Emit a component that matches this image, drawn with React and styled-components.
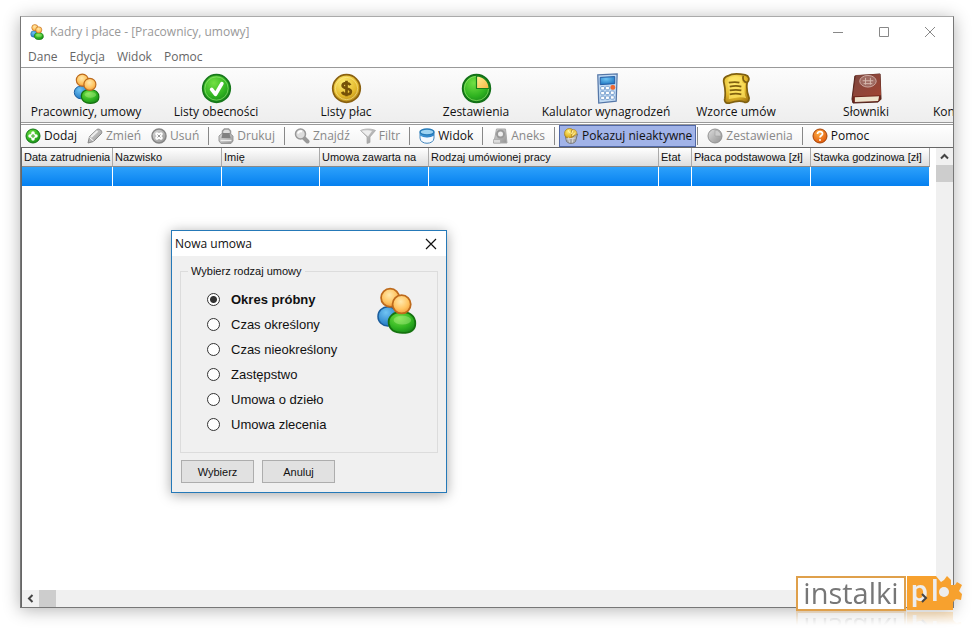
import React, { useState } from 'react';
import styled, { createGlobalStyle, css } from 'styled-components';

const modules = [
  { name: 'Pracownicy, umowy', icon: 'people' },
  { name: 'Listy obecności', icon: 'check' },
  { name: 'Listy płac', icon: 'coin' },
  { name: 'Zestawienia', icon: 'pie' },
  { name: 'Kalulator wynagrodzeń', icon: 'calc' },
  { name: 'Wzorce umów', icon: 'scroll' },
  { name: 'Słowniki', icon: 'book' },
  { name: 'Kon' },
];

// one group = buttons between two separators
const tools = [
  [
    { name: 'Dodaj', icon: 'add' },
    { name: 'Zmień', icon: 'pencil', disabled: true },
    { name: 'Usuń', icon: 'remove', disabled: true },
  ],
  [{ name: 'Drukuj', icon: 'printer', disabled: true }],
  [
    { name: 'Znajdź', icon: 'search', disabled: true },
    { name: 'Filtr', icon: 'funnel', disabled: true },
  ],
  [{ name: 'Widok', icon: 'view' }],
  [{ name: 'Aneks', icon: 'annex', disabled: true }],
  [{ name: 'Pokazuj nieaktywne', icon: 'inactive', pressed: true }],
  [{ name: 'Zestawienia', icon: 'report', disabled: true }],
  [{ name: 'Pomoc', icon: 'help' }],
];

const columns = [
  { name: 'Data zatrudnienia', width: 91 },
  { name: 'Nazwisko', width: 109 },
  { name: 'Imię', width: 98 },
  { name: 'Umowa zawarta na', width: 109 },
  { name: 'Rodzaj umówionej pracy' },
  { name: 'Etat', width: 33 },
  { name: 'Płaca podstawowa [zł]', width: 119 },
  { name: 'Stawka godzinowa [zł]', width: 119 },
];

const contracts = [
  'Okres próbny',
  'Czas określony',
  'Czas nieokreślony',
  'Zastępstwo',
  'Umowa o dzieło',
  'Umowa zlecenia',
];

const shapes = {
  people: (
    <>
      <ellipse cx="10.2" cy="20" rx="6.8" ry="6.6" fill="url(#blue)" stroke="#1a5c9c" strokeWidth="1" />
      <circle cx="11.700" cy="7.300" r="6.200" fill="url(#skin)" stroke="#bd6a1c" strokeWidth="1.200" />
      <path d="M10.700 25c-.7-5 3.300-8 8.800-8s9.300 3 9.300 7.800-3.800 6.500-8.800 6.500-8.500-1.800-9.300-6.300z" fill="url(#green)" stroke="#15720f" strokeWidth="1.200" />
      <ellipse cx="20" cy="22.500" rx="6" ry="3" fill="#c2f59b" opacity=".35" />
      <circle cx="19.500" cy="11.800" r="6.200" fill="url(#skin)" stroke="#bd6a1c" strokeWidth="1.200" />
    </>
  ),
  check: (
    <>
      <circle cx="16" cy="16" r="14.200" fill="url(#green)" stroke="#17781b" strokeWidth="1.800" />
      <circle cx="16" cy="16" r="12" fill="none" stroke="#9ee77f" opacity=".6" />
      <path d="M11 17l4 5 6.500-11" fill="none" stroke="#fff" strokeWidth="3.800" strokeLinecap="round" strokeLinejoin="round" />
    </>
  ),
  coin: (
    <>
      <circle cx="16" cy="16" r="14.200" fill="url(#gold)" stroke="#8a6110" strokeWidth="1.800" />
      <circle cx="16" cy="16" r="11.500" fill="none" stroke="#fff0a0" opacity=".6" />
      <path d="M20 12.500c-1-1.600-2.500-2-4-2-2.500 0-4 .8-4 2.500 0 4 8.500 2 8.500 6 0 2-2 3-4.500 3s-3.800-.8-4.500-2.500M16 8v16" fill="none" stroke="#765208" strokeWidth="2.800" />
    </>
  ),
  pie: (
    <>
      <circle cx="16" cy="16" r="14.200" fill="url(#green)" stroke="#127017" strokeWidth="2" />
      <circle cx="16" cy="16" r="12.500" fill="none" stroke="#a4ea78" opacity=".6" />
      <path d="M16 16V3a13 13 0 0 1 13 13z" fill="url(#pieSlice)" stroke="#17801a" strokeWidth="1.200" />
    </>
  ),
  calc: (
    <>
      <path d="M7 2l20-1-1 28-18 2z" fill="#c3dcf4" stroke="#5577a8" strokeWidth="1.300" />
      <path d="M9.500 4.500l15-.8v7.300l-15 1z" fill="url(#blue)" stroke="#245aa2" />
      <g fill="#fff" stroke="#5d8ac2" strokeWidth=".8">
        <rect x="10" y="14" width="4" height="3.500" rx="1" /><rect x="15" y="13.800" width="4" height="3.500" rx="1" />
        <rect x="10" y="19" width="4" height="3.500" rx="1" /><rect x="15" y="18.800" width="4" height="3.500" rx="1" /><rect x="20" y="18.600" width="4" height="3.500" rx="1" />
        <rect x="10" y="24" width="4" height="3.500" rx="1" /><rect x="15" y="23.800" width="4" height="3.500" rx="1" /><rect x="20" y="23.500" width="4" height="3.500" rx="1" />
      </g>
      <rect x="20" y="12.500" width="5" height="4.800" rx="2" fill="#ef6830" />
    </>
  ),
  scroll: (
    <>
      <path d="M7 3C12 0 20 1 25 2c4 1 5 5 2 8-1 6 0 11 2 16 0 3-2 5-5 4-5-2-9-1-15 1-4 1-6-2-5-5 1-7 0-12-1-16-1-4 1-6 4-7z" fill="url(#gold)" stroke="#80600f" strokeWidth="1.800" />
      <path d="M8 5c5-2 10-2 14-1v6l3 1c-1 6-1 11 1 15-6-2-12 0-18 1 1-7 0-12-1-17z" fill="#ffe565" opacity=".7" />
      <path d="M23 3c-1 3 0 6 4 7M8 10c5-1 8-1 11 0M9 14c5-1 8-1 12 0M9 18c5-1 8-1 12 0M9 22c5-1 8-1 12 0" fill="none" stroke="#80600f" strokeWidth="1.800" />
    </>
  ),
  book: (
    <>
      <path d="M4 3l26-2 1 26-3 3-26 1-1-4z" fill="#70261a" stroke="#4e2119" strokeWidth="1" />
      <path d="M5 2l25-1 1 22-29 1z" fill="url(#leather)" />
      <path d="M4 25l25-1-1 5-24 1z" fill="#eee4cd" />
      <ellipse cx="17.500" cy="8.500" rx="8.500" ry="6" fill="#9f6b62" stroke="#cdaaa2" strokeWidth="1" />
      <path d="M12 8h11M15 5v7M20 5v7M13 11h9" stroke="#d8bbb0" />
    </>
  ),
  add: (
    <>
      <circle cx="16" cy="16" r="14" fill="url(#green)" stroke="#137715" strokeWidth="2" />
      <path d="M16 10v12M10 16h12" stroke="#fff" strokeWidth="7" strokeLinecap="round" />
      <path d="M16 12v8M12 16h8" stroke="#39ab25" strokeWidth="2" />
    </>
  ),
  pencil: (
    <>
      <path d="M2 30l3-13L20 3c4-3 12 3 9 8L13 27z" fill="url(#grey)" stroke="#888" strokeWidth="2" />
      <path d="M8 18L21 6" fill="none" stroke="#eee" strokeWidth="4" />
      <path d="M5 19l8 7" fill="none" stroke="#fff" strokeWidth="2" />
    </>
  ),
  remove: (
    <>
      <circle cx="16" cy="16" r="14" fill="url(#grey)" stroke="#858585" strokeWidth="3" />
      <path d="M12 12l8 8M20 12l-8 8" stroke="#fff" strokeWidth="7" strokeLinecap="round" />
      <path d="M13 13l6 6M19 13l-6 6" stroke="#999" strokeWidth="2" />
    </>
  ),
  printer: (
    <>
      <path d="M9 14V6l4-4h8l4 4v8" fill="#ddd" stroke="#999" strokeWidth="3" />
      <path d="M2 16l6-5h16l6 5v10l-4 5H6l-4-5z" fill="url(#grey)" stroke="#999" strokeWidth="2" />
      <path d="M9 10h14l2 10H7z" fill="#808080" />
      <path d="M5 25h22" stroke="#eee" strokeWidth="3" />
    </>
  ),
  search: (
    <>
      <path d="M20 20l7 7" stroke="#999" strokeWidth="8" strokeLinecap="round" />
      <circle cx="13" cy="12" r="10" fill="#ddd" stroke="#999" strokeWidth="3" />
      <path d="M8 11c1-4 4-5 8-4" fill="none" stroke="#fff" strokeWidth="4" />
    </>
  ),
  funnel: (
    <>
      <path d="M1 5c8-4 22-4 30 0L20 18v11l-6 2V18z" fill="url(#grey)" stroke="#aaa" strokeWidth="1.500" />
      <path d="M4 6c8-2 14-2 20 0L16 17z" fill="#eee" />
    </>
  ),
  view: (
    <>
      <path d="M2 9v11c0 14 28 14 28 0V9z" fill="#f5faff" stroke="#4386bd" strokeWidth="2" />
      <path d="M2 9v6c7 5 21 5 28 0V9z" fill="url(#blue)" />
      <ellipse cx="16" cy="8" rx="14" ry="6" fill="#9fd4f2" stroke="#267bb9" strokeWidth="3" />
    </>
  ),
  annex: (
    <>
      <path d="M9 2h18l3 28H3l3-12z" fill="url(#grey)" stroke="#aaa" strokeWidth="2" />
      <circle cx="17" cy="12" r="7" fill="#eee" stroke="#999" strokeWidth="4" />
      <path d="M3 23h14v7H3z" fill="#ddd" stroke="#999" />
    </>
  ),
  inactive: (
    <>
      <path d="M4 13l3 14c5 5 14 5 18 0l4-15z" fill="#aaa" stroke="#777" strokeWidth="2" />
      <circle cx="13" cy="11" r="10" fill="url(#gold)" stroke="#a58020" strokeWidth="1.500" />
      <path d="M17 4c6-4 13 3 10 9l-10 5z" fill="#eac54c" stroke="#98752b" />
      <path d="M10 4l4 6M20 5l-3 7M24 9l-5 6" stroke="#fff3a8" strokeWidth="2" />
      <path d="M11 19l2 10M20 19l-1 10M7 22l18-2" stroke="#ddd" strokeWidth="2" />
    </>
  ),
  report: (
    <>
      <circle cx="16" cy="16" r="14" fill="url(#grey)" stroke="#929292" strokeWidth="2" />
      <path d="M16 16V4a12 12 0 0 1 12 12z" fill="#ccc" stroke="#999" />
    </>
  ),
  help: (
    <>
      <circle cx="16" cy="16" r="14" fill="url(#orange)" stroke="#a44205" strokeWidth="2" />
      <path d="M11 12c0-7 11-6 10 0 0 3-5 3-5 7" fill="none" stroke="#fff" strokeWidth="3.500" />
      <circle cx="16" cy="24" r="2" fill="#fff" />
    </>
  ),
};

const Gradients = () => (
  <Defs aria-hidden="true">
    <defs>
      <radialGradient id="green" cx=".4" cy=".3" r=".8"><stop stopColor="#73e044" /><stop offset=".6" stopColor="#2fb320" /><stop offset="1" stopColor="#148018" /></radialGradient>
      <radialGradient id="blue" cx=".4" cy=".3" r=".8"><stop stopColor="#70c4f3" /><stop offset="1" stopColor="#176fbd" /></radialGradient>
      <radialGradient id="skin" cx=".45" cy=".35" r=".7"><stop stopColor="#ffe9ad" /><stop offset=".6" stopColor="#ffc460" /><stop offset="1" stopColor="#ee9236" /></radialGradient>
      <radialGradient id="gold" cx=".4" cy=".3" r=".8"><stop stopColor="#ffef76" /><stop offset=".6" stopColor="#e3b82a" /><stop offset="1" stopColor="#a57812" /></radialGradient>
      <radialGradient id="orange" cx=".4" cy=".3" r=".8"><stop stopColor="#ffac42" /><stop offset="1" stopColor="#dc5006" /></radialGradient>
      <linearGradient id="grey" x2="1" y2="1"><stop stopColor="#ddd" /><stop offset="1" stopColor="#929292" /></linearGradient>
      <linearGradient id="leather" x2="1" y2="1"><stop stopColor="#7d4840" /><stop offset="1" stopColor="#a04432" /></linearGradient>
      <linearGradient id="pieSlice" x2="1" y2="1"><stop stopColor="#fff296" /><stop offset="1" stopColor="#f5b542" /></linearGradient>
    </defs>
  </Defs>
);

const Icon = ({ name, size }) => (
  <Glyph $size={size} viewBox="0 0 32 32" aria-hidden="true">{shapes[name]}</Glyph>
);

const Arrow = ({ label, turn, end }) => (
  <ArrowButton type="button" aria-label={label} $turn={turn} $end={end}>
    <svg width="9" height="9" viewBox="0 0 9 9"><path d="M1 6.500l3.500-3.500L8 6.500" fill="none" stroke="#444" strokeWidth="2" /></svg>
  </ArrowButton>
);

const NewContract = () => {
  const [selected, setSelected] = useState(contracts[0]);

  return (
    <Dialog role="dialog" aria-labelledby="dialog-title">
      <DialogTitle>
        <h2 id="dialog-title">Nowa umowa</h2>
        <button type="button" aria-label="Zamknij">
          <svg width="12" height="12" viewBox="0 0 12 12"><path d="M1 1l10 10M11 1L1 11" stroke="#111" strokeWidth="1.200" /></svg>
        </button>
      </DialogTitle>
      <DialogBody>
        <Group>
          <legend>Wybierz rodzaj umowy</legend>
          <Options>
            {contracts.map((name) => (
              <Option key={name} $bold={name === contracts[0]}>
                <input type="radio" name="contract" checked={selected === name} onChange={() => setSelected(name)} />
                {name}
              </Option>
            ))}
          </Options>
          <Icon name="people" size={47} />
        </Group>
        <Actions>
          <button type="button">Wybierz</button>
          <button type="button">Anuluj</button>
        </Actions>
      </DialogBody>
    </Dialog>
  );
};

const App = () => {
  return (
    <Desktop>
      <GlobalStyle />
      <Gradients />
      <Window>
        <TitleBar>
          <Icon name="people" size={16} />
          <h1>Kadry i płace - [Pracownicy, umowy]</h1>
          <WindowButtons>
            <button type="button" aria-label="Minimalizuj">
              <svg width="12" height="12"><path d="M1 6.500h10" stroke="#888" /></svg>
            </button>
            <button type="button" aria-label="Maksymalizuj">
              <svg width="12" height="12"><path d="M1.500 1.500h9v9h-9z" fill="none" stroke="#888" /></svg>
            </button>
            <button type="button" aria-label="Zamknij">
              <svg width="12" height="12"><path d="M1 1l10 10M11 1L1 11" stroke="#888" /></svg>
            </button>
          </WindowButtons>
        </TitleBar>
        <Menu>
          {['Dane', 'Edycja', 'Widok', 'Pomoc'].map((item) => (
            <button type="button" key={item}>{item}</button>
          ))}
        </Menu>
        <Modules>
          {modules.map((item) => (
            <ModuleButton type="button" key={item.name} $partial={!item.icon}>
              {item.icon && <Icon name={item.icon} size={31} />}
              {item.name}
            </ModuleButton>
          ))}
        </Modules>
        <Toolbar>
          {tools.map((group, index) => (
            <ToolGroup key={index} $tight={group[0].pressed}>
              {group.map((tool) => (
                <ToolButton type="button" key={tool.name} disabled={tool.disabled} $pressed={tool.pressed}>
                  <Icon name={tool.icon} size={16} />
                  {tool.name}
                </ToolButton>
              ))}
            </ToolGroup>
          ))}
        </Toolbar>
        <Content>
          <TableArea>
            <Table>
              <colgroup>
                {columns.map((column) => <Column key={column.name} $width={column.width} />)}
              </colgroup>
              <thead>
                <tr>{columns.map((column) => <th key={column.name}>{column.name}</th>)}</tr>
              </thead>
              <tbody>
                <tr>{columns.map((column) => <td key={column.name} />)}</tr>
              </tbody>
            </Table>
          </TableArea>
          <VerticalScroll>
            <Arrow label="W górę" turn={0} />
            <Thumb />
          </VerticalScroll>
        </Content>
        <HorizontalScroll>
          <Arrow label="W lewo" turn={-90} />
          <Thumb />
          <Arrow label="W prawo" turn={90} end />
        </HorizontalScroll>
      </Window>
      <NewContract />
      <Watermark>
        <LogoName>instalki</LogoName>
        <LogoMark viewBox="0 0 56 35">
          <path d="M1 0h29l5 6 3-2 3-4 4 4v5h4l2-3 5 3-3 6 3 3-1 6-5-1-3 3v8H1z" fill="#f7a12e" />
          <text x="5" y="25">p</text>
          <text x="25" y="25">l</text>
          <circle cx="38" cy="16" r="5" fill="#ededed" />
          <path d="M16 18l4 4-4 4" fill="none" stroke="#444" strokeWidth="2" />
        </LogoMark>
      </Watermark>
    </Desktop>
  );
};

export default App

const GlobalStyle = createGlobalStyle`
  * {
    box-sizing: border-box;
  }
  body {
    margin: 0;
    background: #fff;
    color: #111;
    font: 12px/16px "Open Sans", "Noto Sans", sans-serif;
  }
  button {
    padding: 0;
    border: 0;
    background: none;
    color: inherit;
    font: inherit;
  }
  h1, h2 {
    margin: 0;
    font: inherit;
  }
`

const Defs = styled.svg`
  position: absolute;
  width: 0;
  height: 0;
`

const Glyph = styled.svg`
  flex: none;
  width: ${({ $size }) => $size}px;
  height: ${({ $size }) => $size}px;
`

const Desktop = styled.main`
  position: relative;
  display: flex;
  min-height: 100vh;
  padding: 16px 20px 23px;
  overflow: hidden;
`

const Window = styled.div`
  display: flex;
  flex: 1;
  flex-direction: column;
  min-width: 0;
  border: 1px solid #777;
  border-top-color: #aaa;
  background: #fff;
  box-shadow: 0 2px 16px rgba(0, 0, 0, .3);
`

const TitleBar = styled.header`
  display: flex;
  align-items: center;
  height: 30px;
  padding-left: 8px;
  gap: 5px;
  color: #999;
`

const WindowButtons = styled.div`
  display: flex;
  margin-left: auto;
  button {
    display: grid;
    place-items: center;
    width: 46px;
    height: 28px;
  }
`

const Menu = styled.nav`
  display: flex;
  height: 21px;
  padding: 0 7px;
  gap: 12px;
  border-bottom: 1px solid #999;
  color: #666;
  button {
    height: 19px;
  }
`

const Modules = styled.nav`
  display: flex;
  height: 55px;
  overflow: hidden;
  border-bottom: 1px solid #999;
  background: linear-gradient(#fcfcfc, #eee);
`

const ModuleButton = styled.button`
  display: flex;
  flex: ${({ $partial }) => ($partial ? '1 1 0' : '0 0 130px')};
  flex-direction: column;
  align-items: ${({ $partial }) => ($partial ? 'flex-start' : 'center')};
  justify-content: flex-end;
  min-width: 0;
  padding-bottom: 2px;
  padding-left: ${({ $partial }) => ($partial ? '2px' : '0')};
  white-space: nowrap;
`

const Toolbar = styled.div`
  display: flex;
  height: 23px;
  margin-top: 1px;
  border-top: 1px solid #999;
  background: linear-gradient(#fff, #f3f3f3);
`

const ToolGroup = styled.div`
  display: flex;
  align-items: center;
  padding: 0 9px 0 4px;
  gap: 10px;
  &:not(:first-child) {
    padding: ${({ $tight }) => ($tight ? '0 1px 0 5px' : '0 9px 0 10px')};
    background: linear-gradient(#888, #888) left center / 1px 18px no-repeat;
  }
`

const ToolButton = styled.button`
  display: flex;
  align-items: center;
  height: 22px;
  gap: 3px;
  white-space: nowrap;
  &:disabled {
    color: #888;
  }
  ${({ $pressed }) => $pressed && css`
    padding: 0 3px;
    border: 1px solid #5067a5;
    background: #a1b3e8;
  `}
`

const Content = styled.div`
  display: flex;
  flex: 1;
  border: solid #666;
  border-width: 1px 0 0 1px;
`

const TableArea = styled.div`
  flex: 1;
  padding-right: 6px;
`

const Table = styled.table`
  width: 100%;
  table-layout: fixed;
  border-collapse: separate;
  border-spacing: 0;
  font: 11px/18px "Liberation Sans", Arial, sans-serif;
  th {
    height: 19px;
    padding: 0 0 0 2px;
    border-right: 1px solid #aaa;
    border-bottom: 1px solid #888;
    background: linear-gradient(#fff, #ddd);
    font-weight: normal;
    text-align: left;
    white-space: nowrap;
  }
  td {
    height: 19px;
    padding: 0;
    border-right: 1px solid #fff;
    background: linear-gradient(#2da1fb, #0580ef);
  }
`

const Column = styled.col`
  width: ${({ $width }) => ($width ? `${$width}px` : 'auto')};
`

const ArrowButton = styled.button`
  display: grid;
  place-items: center;
  width: 17px;
  height: 17px;
  margin-left: ${({ $end }) => ($end ? 'auto' : '0')};
  svg {
    transform: rotate(${({ $turn }) => $turn}deg);
  }
`

const Thumb = styled.div`
  width: 17px;
  height: 17px;
  background: #cdcdcd;
`

const VerticalScroll = styled.div`
  width: 17px;
  background: #f0f0f0;
`

const HorizontalScroll = styled.div`
  display: flex;
  height: 17px;
  border-left: 1px solid #666;
  background: #f0f0f0;
`

const Dialog = styled.section`
  position: absolute;
  top: 230px;
  left: 171px;
  width: 276px;
  border: 1px solid #2579b8;
  background: #f0f0f0;
  box-shadow: 0 2px 12px rgba(0, 0, 0, .35);
  font: 11px/16px "Liberation Sans", Arial, sans-serif;
`

const DialogTitle = styled.header`
  display: flex;
  align-items: center;
  justify-content: space-between;
  height: 25px;
  padding: 0 9px 0 3px;
  background: #fff;
  font: 12px/16px "Open Sans", "Noto Sans", sans-serif;
  button {
    display: grid;
  }
`

const DialogBody = styled.div`
  padding: 7px 8px 9px;
`

const Group = styled.fieldset`
  display: flex;
  justify-content: space-between;
  height: 190px;
  margin: 0;
  padding: 8px 17px 0 26px;
  border: 1px solid #dcdcdc;
  legend {
    margin-left: -19px;
    padding: 0 3px;
  }
`

const Options = styled.div`
  display: flex;
  flex-direction: column;
`

const Option = styled.label`
  display: flex;
  align-items: center;
  height: 25px;
  gap: 11px;
  font-size: 13px;
  font-weight: ${({ $bold }) => ($bold ? 'bold' : 'normal')};
  input {
    appearance: none;
    width: 13px;
    height: 13px;
    margin: 0;
    border: 1px solid #333;
    border-radius: 50%;
    background: #fff;
  }
  input:checked {
    background: radial-gradient(circle, #333 0 3px, #fff 4px);
  }
`

const Actions = styled.div`
  display: flex;
  gap: 8px;
  padding: 7px 1px 0;
  button {
    width: 73px;
    height: 23px;
    border: 1px solid #adadad;
    background: #e1e1e1;
  }
`

const Watermark = styled.div`
  position: absolute;
  right: 12px;
  bottom: 20px;
  display: flex;
  height: 35px;
  -webkit-box-reflect: below 0 linear-gradient(transparent 60%, rgba(0, 0, 0, .3));
`

const LogoName = styled.div`
  width: 110px;
  border: 2px solid #dfa04b;
  background: #fff;
  color: #777;
  font: 29px/30px "Open Sans", sans-serif;
  text-align: center;
`

const LogoMark = styled.svg`
  width: 56px;
  height: 35px;
  overflow: visible;
  text {
    fill: #ededed;
    font: 500 30px Roboto, sans-serif;
  }
`
